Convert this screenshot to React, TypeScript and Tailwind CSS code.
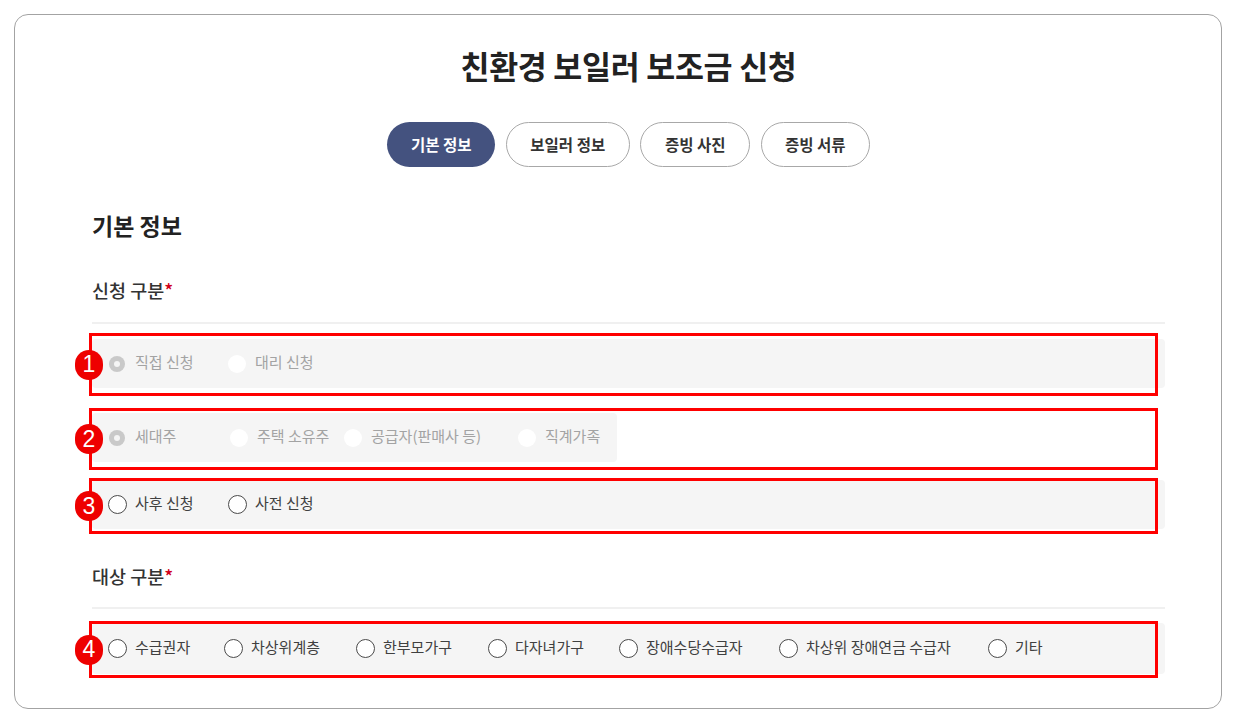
import React from 'react';

type RadioKind = 'checkedDisabled' | 'disabled' | 'empty';

interface OptionItem {
  label: string;
  width?: string;
}

const RadioMark: React.FC<{ kind: RadioKind }> = ({ kind }) => {
  if (kind === 'checkedDisabled') {
    return (
      <span className="flex h-[20px] w-[20px] items-center justify-center">
        <span className="flex h-[16px] w-[16px] items-center justify-center rounded-full bg-[#c9c9c9]">
          <span className="h-[6px] w-[6px] rounded-full bg-[#f5f5f5]" />
        </span>
      </span>
    );
  }
  if (kind === 'disabled') {
    return (
      <span className="flex h-[20px] w-[20px] items-center justify-center">
        <span className="h-[18px] w-[18px] rounded-full bg-white" />
      </span>
    );
  }
  return (
    <span className="flex h-[20px] w-[20px] items-center justify-center">
      <span className="h-[19px] w-[19px] rounded-full border-[1.5px] border-[#4a4a4a] bg-white" />
    </span>
  );
};

const RadioOption: React.FC<{ item: OptionItem; kind: RadioKind; disabled?: boolean }> = ({ item, kind, disabled }) => (
  <label className={`flex shrink-0 items-center gap-[8px] ${item.width ?? ''}`}>
    <RadioMark kind={kind} />
    <span className={`mb-[3px] whitespace-nowrap text-[15px] leading-[20px] ${disabled ? 'text-[#a3a3a3]' : 'text-[#404040]'}`}>
      {item.label}
    </span>
  </label>
);

// annotation overlay: red outline with numbered badge
const Marker: React.FC<{ n: number; className: string }> = ({ n, className }) => (
  <div className={`pointer-events-none absolute border-[3px] border-[#ff0000] ${className}`}>
    <span className="absolute left-[-17px] top-1/2 flex h-[30px] w-[28px] -translate-y-1/2 items-center justify-center rounded-full bg-[#ee0000] font-['Liberation_Sans',sans-serif] text-[23px] leading-none text-white">
      {n}
    </span>
  </div>
);

const tabs = [
  { label: '기본 정보', width: 'w-[108px]', active: true },
  { label: '보일러 정보', width: 'w-[124px]', active: false },
  { label: '증빙 사진', width: 'w-[110px]', active: false },
  { label: '증빙 서류', width: 'w-[109px]', active: false },
];

const row1: OptionItem[] = [{ label: '직접 신청', width: 'w-[120px]' }, { label: '대리 신청' }];
const row2: OptionItem[] = [
  { label: '세대주', width: 'w-[122px]' },
  { label: '주택 소유주', width: 'w-[114px]' },
  { label: '공급자(판매사 등)', width: 'w-[174px]' },
  { label: '직계가족' },
];
const row3: OptionItem[] = [{ label: '사후 신청', width: 'w-[120px]' }, { label: '사전 신청' }];
const row4: OptionItem[] = [
  { label: '수급권자', width: 'w-[116px]' },
  { label: '차상위계층', width: 'w-[132px]' },
  { label: '한부모가구', width: 'w-[132px]' },
  { label: '다자녀가구', width: 'w-[131px]' },
  { label: '장애수당수급자', width: 'w-[160px]' },
  { label: '차상위 장애연금 수급자', width: 'w-[209px]' },
  { label: '기타' },
];

export default function App() {
  return (
    <div className="min-h-screen bg-white pl-[14px] pr-[13px] pt-[14px] font-['Noto_Sans_CJK_KR','Noto_Sans',sans-serif]">
      <div className="rounded-[14px] border border-[#a3a3a3] pb-[34px] pl-[77px] pr-[56px] pt-[30px]">
        <h1 className="text-center text-[31.5px] font-bold leading-[40px] tracking-[-0.3px] text-[#222222]">
          친환경 보일러 보조금 신청
        </h1>

        <div className="mt-[37px] flex justify-center gap-[10.5px]">
          {tabs.map((t) => (
            <button
              key={t.label}
              type="button"
              className={`h-[45px] ${t.width} rounded-full text-[15.5px] font-bold ${
                t.active ? 'bg-[#44527f] text-white' : 'border border-[#a8a8a8] bg-white text-[#333333]'
              }`}
            >
              {t.label}
            </button>
          ))}
        </div>

        <h2 className="mt-[43px] text-[23px] font-bold leading-[30px] text-[#222222]">기본 정보</h2>

        <p className="mt-[38px] text-[18.5px] font-medium leading-[24px] text-[#333333]">
          신청 구분<span className="text-[#d0021b]">*</span>
        </p>
        <div className="mt-[20px] h-[2px] bg-[#f0f0f0]" />

        <div className="relative mt-[15px]">
          <div className="flex h-[49px] items-center rounded-[4px] bg-[#f5f5f5] pl-[15px]">
            {row1.map((o, i) => (
              <RadioOption key={o.label} item={o} kind={i === 0 ? 'checkedDisabled' : 'disabled'} disabled />
            ))}
          </div>
          <Marker n={1} className="-top-[6px] -bottom-[8px] -left-[3px] right-[7px]" />
        </div>

        <div className="relative mt-[25px]">
          <div className="flex h-[49px] w-[525px] items-center rounded-[4px] bg-[#f5f5f5] pl-[15px]">
            {row2.map((o, i) => (
              <RadioOption key={o.label} item={o} kind={i === 0 ? 'checkedDisabled' : 'disabled'} disabled />
            ))}
          </div>
          <Marker n={2} className="-top-[5px] -bottom-[8px] -left-[3px] right-[7px]" />
        </div>

        <div className="relative mt-[18px]">
          <div className="flex h-[49px] items-center rounded-[4px] bg-[#f5f5f5] pl-[15px]">
            {row3.map((o) => (
              <RadioOption key={o.label} item={o} kind="empty" />
            ))}
          </div>
          <Marker n={3} className="-top-[2px] -bottom-[5px] -left-[3px] right-[7px]" />
        </div>

        <p className="mt-[35px] text-[18.5px] font-medium leading-[24px] text-[#333333]">
          대상 구분<span className="text-[#d0021b]">*</span>
        </p>
        <div className="mt-[19px] h-[2px] bg-[#f0f0f0]" />

        <div className="relative mt-[14px]">
          <div className="flex h-[51px] items-center rounded-[4px] bg-[#f5f5f5] pl-[15px]">
            {row4.map((o) => (
              <RadioOption key={o.label} item={o} kind="empty" />
            ))}
          </div>
          <Marker n={4} className="-top-[2px] -bottom-[4px] -left-[3px] right-[7px]" />
        </div>
      </div>
    </div>
  );
}
